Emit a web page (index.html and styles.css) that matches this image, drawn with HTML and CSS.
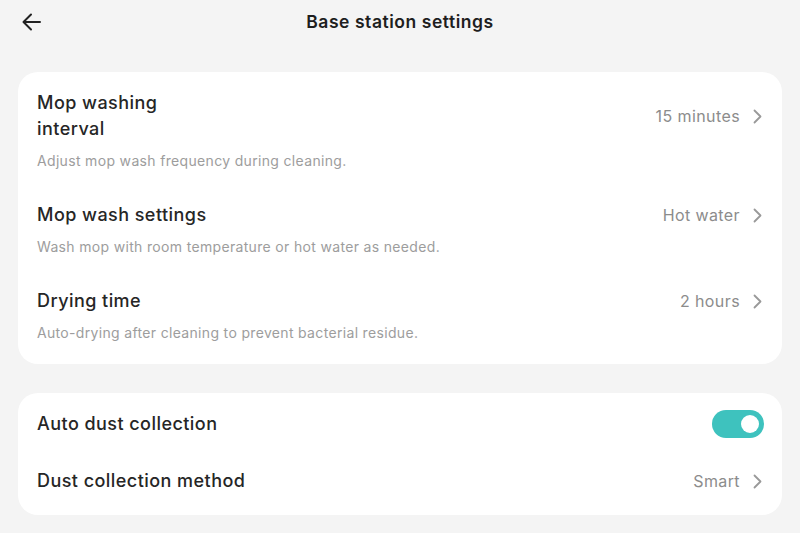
FILE: index.html
```html
<!DOCTYPE html>
<html lang="en">
<head>
<meta charset="utf-8">
<title>Base station settings</title>
<link rel="stylesheet" href="styles.css">
</head>
<body>
<div class="page">
  <header class="topbar">
    <button class="back" aria-label="Back">
      <svg width="20" height="18" viewBox="0 0 20 18" fill="none" stroke="#222" stroke-width="2" stroke-linecap="round" stroke-linejoin="round"><path d="M18 9H2M9 1.5L1.5 9 9 16.5"/></svg>
    </button>
    <h1 class="title">Base station settings</h1>
  </header>

  <section class="card card-main">
    <div class="row">
      <div class="head">
        <div class="label">Mop washing<br>interval</div>
        <div class="value">15 minutes<span class="chev"><svg width="9" height="15" viewBox="0 0 9 15" fill="none" stroke="#999" stroke-width="1.8" stroke-linecap="round" stroke-linejoin="round"><path d="M1.5 1.5l6 6-6 6"/></svg></span></div>
      </div>
      <div class="desc">Adjust mop wash frequency during cleaning.</div>
    </div>
    <div class="row">
      <div class="head">
        <div class="label">Mop wash settings</div>
        <div class="value">Hot water<span class="chev"><svg width="9" height="15" viewBox="0 0 9 15" fill="none" stroke="#999" stroke-width="1.8" stroke-linecap="round" stroke-linejoin="round"><path d="M1.5 1.5l6 6-6 6"/></svg></span></div>
      </div>
      <div class="desc">Wash mop with room temperature or hot water as needed.</div>
    </div>
    <div class="row">
      <div class="head">
        <div class="label">Drying time</div>
        <div class="value">2 hours<span class="chev"><svg width="9" height="15" viewBox="0 0 9 15" fill="none" stroke="#999" stroke-width="1.8" stroke-linecap="round" stroke-linejoin="round"><path d="M1.5 1.5l6 6-6 6"/></svg></span></div>
      </div>
      <div class="desc">Auto-drying after cleaning to prevent bacterial residue.</div>
    </div>
  </section>

  <section class="card card-dust">
    <div class="srow">
      <div class="label">Auto dust collection</div>
      <div class="toggle on"><span class="knob"></span></div>
    </div>
    <div class="srow">
      <div class="label">Dust collection method</div>
      <div class="value">Smart<span class="chev"><svg width="9" height="15" viewBox="0 0 9 15" fill="none" stroke="#999" stroke-width="1.8" stroke-linecap="round" stroke-linejoin="round"><path d="M1.5 1.5l6 6-6 6"/></svg></span></div>
    </div>
  </section>
</div>
</body>
</html>
```

FILE: styles.css
```css
* { box-sizing: border-box; }
html, body {
  margin: 0;
  padding: 0;
  background: #f4f4f4;
  font-family: "Inter", "Noto Sans", sans-serif;
  color: #222;
}
.page {
  width: 800px;
  height: 533px;
  overflow: hidden;
  padding: 0 18px;
}
.topbar {
  position: relative;
  height: 72px;
  display: flex;
  justify-content: center;
}
.back {
  position: absolute;
  left: 4px;
  top: 13px;
  border: 0;
  background: none;
  padding: 0;
  width: 22px;
  height: 18px;
  display: flex;
}
.title {
  margin: 0;
  font-size: 17.5px;
  font-weight: 600;
  line-height: 22px;
  margin-top: 11px;
  color: #1e1e1e;
  letter-spacing: 0.55px;
}
.card {
  background: #fff;
  border-radius: 20px;
}
.card-main {
  padding: 18px 20px 21px 19px;
  display: flex;
  flex-direction: column;
  gap: 31px;
}
.head {
  display: flex;
  align-items: center;
  justify-content: space-between;
}
.label {
  font-size: 18px;
  line-height: 26px;
  font-weight: 500;
  color: #262626;
  letter-spacing: 0.45px;
}
.desc {
  margin-top: 9px;
  font-size: 14px;
  line-height: 20px;
  color: #9d9d9d;
  letter-spacing: 0.33px;
}
.value {
  display: flex;
  align-items: center;
  font-size: 16px;
  color: #8c8c8c;
  letter-spacing: 0.4px;
}
.chev {
  display: flex;
  margin-left: 13px;
}
.card-dust {
  margin-top: 29px;
  padding: 17px 18px 20px 19px;
  display: flex;
  flex-direction: column;
  gap: 29px;
}
.srow {
  min-height: 28px;
  display: flex;
  align-items: center;
  justify-content: space-between;
}
.srow .value { margin-right: 2px; }
.toggle {
  width: 52px;
  height: 28px;
  border-radius: 14px;
  background: #3ec2be;
  position: relative;
}
.knob {
  position: absolute;
  right: 5px;
  top: 5px;
  width: 18px;
  height: 18px;
  border-radius: 50%;
  background: #fff;
}
```
